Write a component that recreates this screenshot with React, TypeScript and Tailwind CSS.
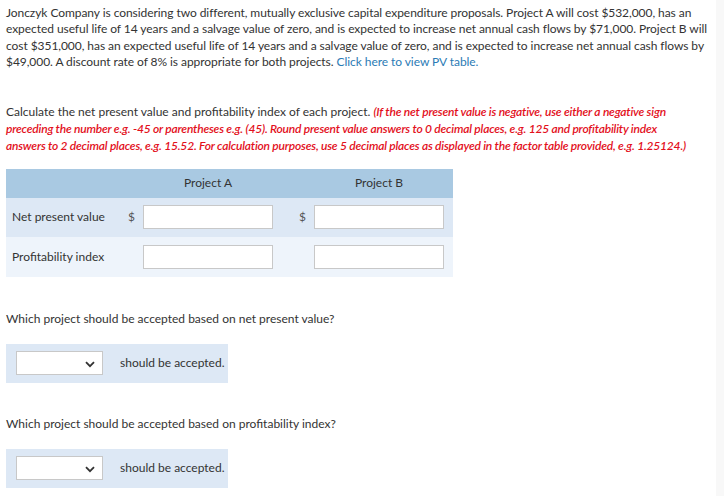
import React from "react";

function Chevron() {
  return (
    <svg width="10" height="7" viewBox="0 0 10 7" className="absolute right-[7px] top-[9px]">
      <path d="M1 1.2 L5 5.2 L9 1.2" fill="none" stroke="#333" strokeWidth="1.8" />
    </svg>
  );
}

function SelectBox() {
  return (
    <div className="flex items-center h-[39px] w-[222px] bg-[#dde8f5] pl-[10px]">
      <div className="relative w-[87px] h-[24px] bg-white border border-[#c8c8c8]">
        <Chevron />
      </div>
      <span className="ml-[17px] text-[#333]">should be accepted.</span>
    </div>
  );
}

function Input() {
  return <div className="h-[24px] w-[130px] bg-white border border-[#c8c8c8]" />;
}

export default function App() {
  return (
    <div
      className="w-[724px] h-[496px] bg-white flex text-[12px] text-[#333]"
      style={{ fontFamily: "Lato, 'Open Sans', sans-serif" }}
    >
      <div className="w-[716px] pl-[6px] pt-[5px]">
        <p className="leading-[16.3px] whitespace-nowrap tracking-[-0.06px]">
          Jonczyk Company is considering two different, mutually exclusive capital expenditure proposals. Project A will cost $532,000, has an
          <br />
          expected useful life of 14 years and a salvage value of zero, and is expected to increase net annual cash flows by $71,000. Project B will
          <br />
          cost $351,000, has an expected useful life of 14 years and a salvage value of zero, and is expected to increase net annual cash flows by
          <br />
          $49,000. A discount rate of 8% is appropriate for both projects.{" "}
          <span className="text-[#2b7bb5]">Click here to view PV table.</span>
        </p>
        <p className="leading-[16.8px] mt-[34px] whitespace-nowrap">
          Calculate the net present value and profitability index of each project.{" "}
          <span className="text-[#e3101c] italic font-semibold tracking-[-0.2px]">
            (If the net present value is negative, use either a negative sign
            <br />
            preceding the number e.g. -45 or parentheses e.g. (45). Round present value answers to 0 decimal places, e.g. 125 and profitability index
            <br />
            answers to 2 decimal places, e.g. 15.52. For calculation purposes, use 5 decimal places as displayed in the factor table provided, e.g. 1.25124.)
          </span>
        </p>
        <div className="mt-[14px] w-[447px]">
          <div className="flex h-[29px] bg-[#a9c9e2] items-center">
            <div className="w-[137px]" />
            <div className="w-[130px] text-center">Project A</div>
            <div className="w-[41px]" />
            <div className="w-[130px] text-center">Project B</div>
          </div>
          <div className="flex h-[39px] bg-[#dde8f5] items-center">
            <div className="w-[122px] pl-[6px]">Net present value</div>
            <div className="w-[15px] text-[#555]">$</div>
            <Input />
            <div className="w-[41px] pl-[26px] text-[#555]">$</div>
            <Input />
          </div>
          <div className="flex h-[40px] bg-[#eef4fb] items-center">
            <div className="w-[137px] pl-[6px]">Profitability index</div>
            <Input />
            <div className="w-[41px]" />
            <Input />
          </div>
        </div>
        <p className="mt-[34px] leading-[16px]">Which project should be accepted based on net present value?</p>
        <div className="mt-[17px]">
          <SelectBox />
        </div>
        <p className="mt-[33px] leading-[16px]">Which project should be accepted based on profitability index?</p>
        <div className="mt-[17px]">
          <SelectBox />
        </div>
      </div>
      <div className="flex-1 bg-[#f8f8f8]" />
    </div>
  );
}
